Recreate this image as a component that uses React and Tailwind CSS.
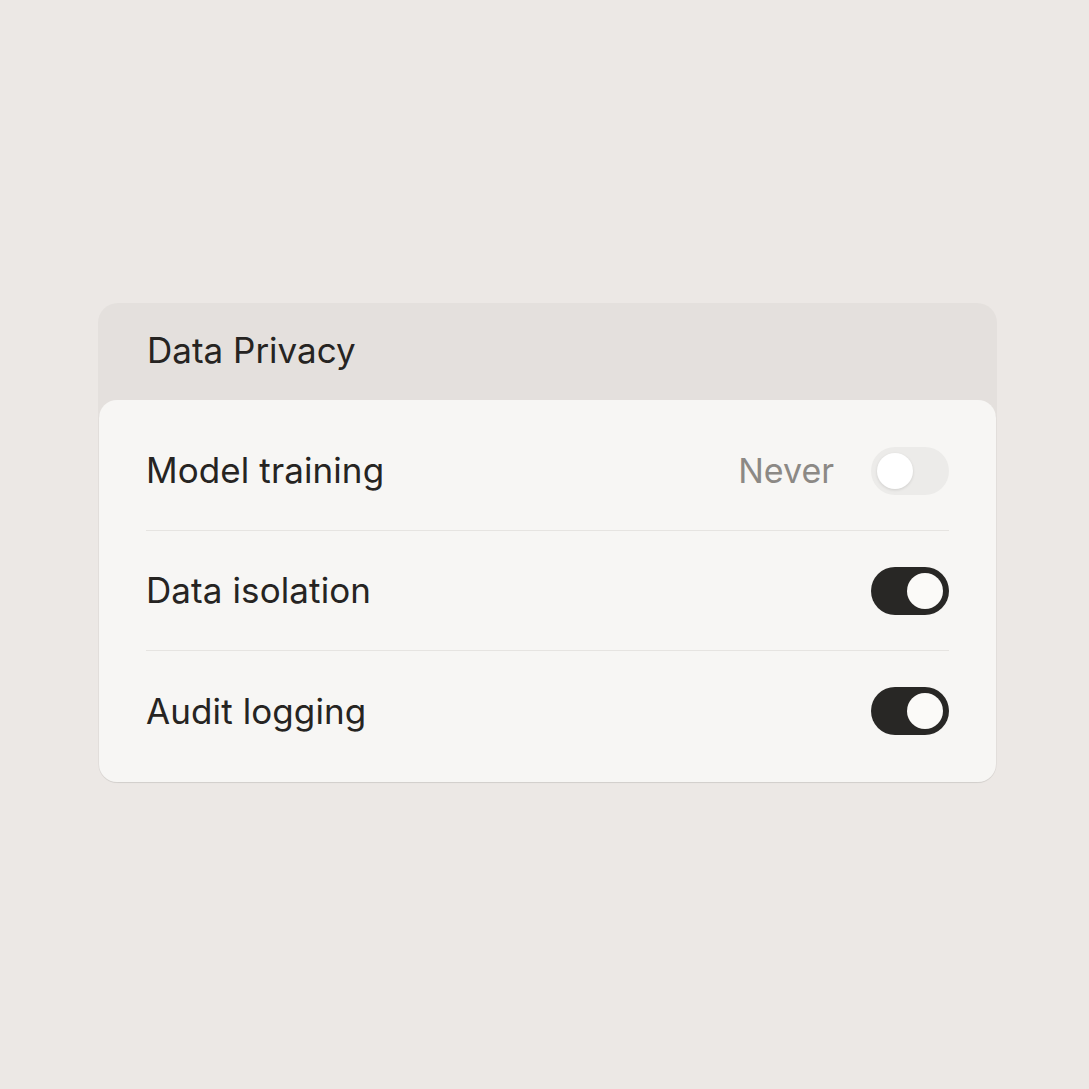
import React from "react";

function Toggle({ on }) {
  return on ? (
    <div className="w-[78px] h-[48px] rounded-full bg-[#282725] flex items-center justify-end px-[6px]">
      <div className="w-[36px] h-[36px] rounded-full bg-[#fbfaf8]" />
    </div>
  ) : (
    <div className="w-[78px] h-[48px] rounded-full bg-[#ecebe9] flex items-center justify-start px-[6px]">
      <div className="w-[36px] h-[36px] rounded-full bg-white shadow-[0_1px_3px_rgba(0,0,0,0.12)]" />
    </div>
  );
}

function Row({ label, value, on, divider }) {
  return (
    <div className={`h-[120px] flex items-center justify-between ${divider ? "border-b border-[#e6e4e1]" : ""}`}>
      <span className="text-[35px] text-[#262422] tracking-[0.1px]">{label}</span>
      <div className="flex items-center gap-[37px]">
        {value && <span className="text-[34px] text-[#8c8985]">{value}</span>}
        <Toggle on={on} />
      </div>
    </div>
  );
}

export default function App() {
  return (
    <div
      className="w-[1089px] h-[1089px] bg-[#ece8e5] flex items-start justify-start pt-[303px] pl-[98px]"
      style={{ fontFamily: "Inter, 'Noto Sans', sans-serif" }}
    >
      <div className="w-[899px] rounded-[20px] bg-[#e4e0dd] px-px pb-px">
        <div className="h-[97px] flex items-center px-[48px] pb-[2px]">
          <span className="text-[35px] text-[#262422]">Data Privacy</span>
        </div>
        <div className="rounded-[18px] bg-[#f7f6f4] px-[47px] py-[11px] shadow-[0_1px_1px_rgba(0,0,0,0.08)]">
          <Row label="Model training" value="Never" on={false} divider />
          <Row label="Data isolation" on divider />
          <Row label="Audit logging" on />
        </div>
      </div>
    </div>
  );
}
